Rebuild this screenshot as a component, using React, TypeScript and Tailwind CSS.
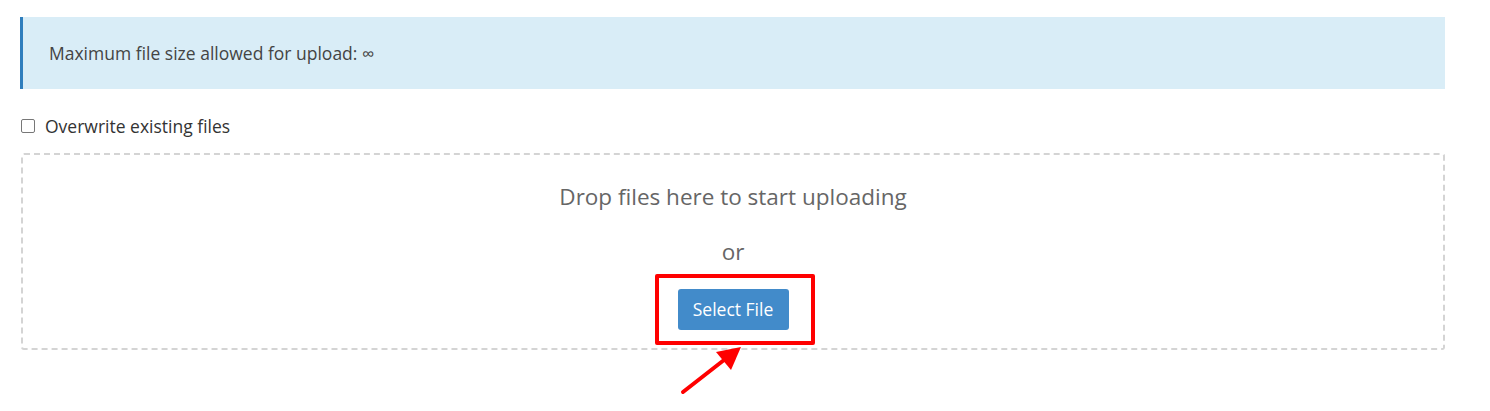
import React from 'react';

const App = () => {
  return (
    <div className="relative w-[1490px] h-[411px] bg-white font-['Open_Sans',sans-serif] text-[#333]">
      <div className="pt-[17px] pl-[20px] w-[1445px]">
        <div className="h-[72px] flex items-center bg-[#d9edf7] border-l-[3px] border-[#2f7ebd] pl-[26px] text-[17.5px] text-[#444]">
          Maximum file size allowed for upload: ∞
        </div>

        <label className="flex items-center mt-[27px] h-[20px] text-[17.5px] text-[#333]">
          <span className="ml-[1px] w-[14px] h-[14px] border border-[#777] rounded-[2px] bg-white" />
          <span className="ml-[10px]">Overwrite existing files</span>
        </label>

        <div className="mt-[17px] ml-[1px] h-[197px] border-2 border-dashed border-[#d4d4d4] rounded-[3px] flex flex-col items-center text-[#666]">
          <div className="shrink-0 mt-[27px] text-[22.5px] leading-[30px]">Drop files here to start uploading</div>
          <div className="shrink-0 mt-[25px] text-[22.5px] leading-[30px]">or</div>
          <button className="shrink-0 mt-[22px] w-[111px] h-[41px] leading-[41px] bg-[#428bca] rounded-[3px] text-white text-[17.5px]">
            Select File
          </button>
        </div>
      </div>

      {/* annotation */}
      <div className="absolute left-[655px] top-[274px] w-[160px] h-[71px] border-4 border-[#ff0000] rounded-[2px]" />
      <svg className="absolute left-0 top-0" width="1490" height="411" viewBox="0 0 1490 411">
        <line x1="683" y1="392" x2="724" y2="360" stroke="#ff0000" strokeWidth="4" strokeLinecap="round" />
        <polygon points="741,347 716,352 731,370" fill="#ff0000" />
      </svg>
    </div>
  );
};

export default App;
